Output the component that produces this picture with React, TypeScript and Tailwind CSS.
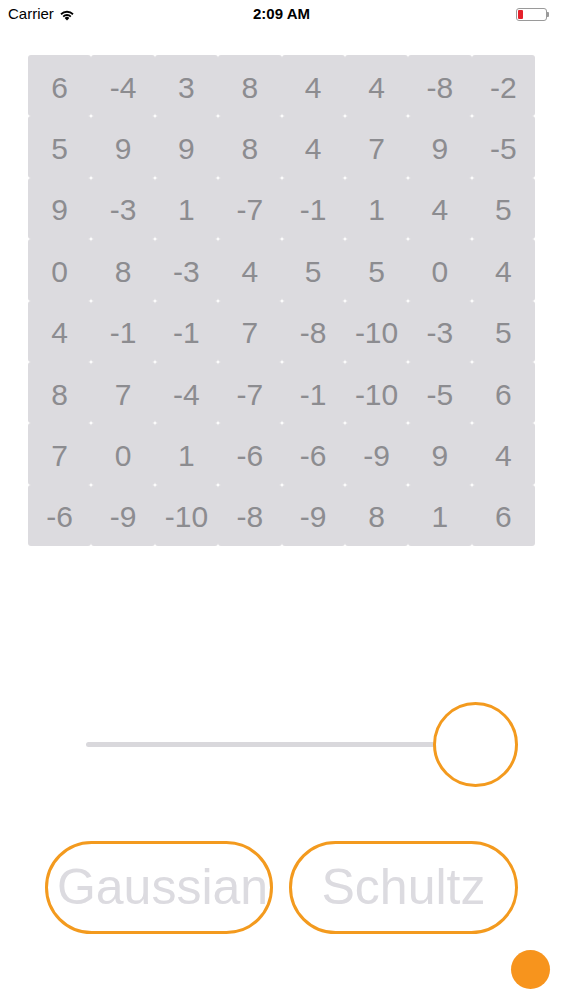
import React from "react";

const grid = [
  [6, -4, 3, 8, 4, 4, -8, -2],
  [5, 9, 9, 8, 4, 7, 9, -5],
  [9, -3, 1, -7, -1, 1, 4, 5],
  [0, 8, -3, 4, 5, 5, 0, 4],
  [4, -1, -1, 7, -8, -10, -3, 5],
  [8, 7, -4, -7, -1, -10, -5, 6],
  [7, 0, 1, -6, -6, -9, 9, 4],
  [-6, -9, -10, -8, -9, 8, 1, 6],
];

export default function App() {
  return (
    <div
      className="relative w-[563px] h-[1000px] bg-white overflow-hidden"
      style={{ fontFamily: '"Liberation Sans", Arial, sans-serif' }}
    >
      {/* Status bar */}
      <div className="relative h-[29px] flex items-center px-[8px] text-[15px] text-black">
        <div className="flex items-center gap-[5px]">
          <span>Carrier</span>
          <svg width="16" height="12" viewBox="0 0 16 12">
            <path d="M8 11.5 L5.6 8.9 A3.5 3.5 0 0 1 10.4 8.9 Z" fill="#000" />
            <path d="M3.6 6.9 A6.3 6.3 0 0 1 12.4 6.9 L11.2 8.2 A4.6 4.6 0 0 0 4.8 8.2 Z" fill="#000" />
            <path d="M1.4 4.6 A9.3 9.3 0 0 1 14.6 4.6 L13.4 5.9 A7.6 7.6 0 0 0 2.6 5.9 Z" fill="#000" />
          </svg>
        </div>
        <div className="absolute left-0 right-0 top-0 h-[29px] flex items-center justify-center font-bold text-[15px]">
          2:09 AM
        </div>
        <div className="ml-auto flex items-center mr-[6px]">
          <div className="w-[31px] h-[13px] border border-[#9a9a9a] rounded-[3px] p-[1px] flex">
            <div className="w-[5px] h-full bg-[#e5212b] rounded-[1px]" />
          </div>
          <div className="w-[2px] h-[5px] bg-[#9a9a9a] rounded-r-[1px]" />
        </div>
      </div>

      {/* Grid */}
      <div className="ml-[28px] mt-[26px] w-[507px] grid grid-cols-8 gap-0">
        {grid.flat().map((n, i) => (
          <div
            key={i}
            className="h-[61.4px] bg-[#dcdbdf] rounded-[3px] flex items-center justify-center text-[30px] text-[#8c8c90] pt-[3px]"
          >
            {n}
          </div>
        ))}
      </div>

      {/* Slider */}
      <div className="mt-[155px] ml-[86px] w-[432px] h-[86px] flex items-center">
        <div className="flex-1 h-[5px] bg-[#d9d8dc] rounded-full" />
        <div className="w-[85px] h-[85px] rounded-full border-[3px] border-[#f39a1e] bg-white shrink-0 -ml-[2px]" />
      </div>

      {/* Buttons */}
      <div className="mt-[54px] ml-[45px] flex gap-[16px]">
        <div className="w-[228px] h-[93px] rounded-full border-[3px] border-[#f39a1e] flex items-center justify-center text-[50px] text-[#dcdbe0] whitespace-nowrap">
          <span className="ml-[7px]">Gaussian</span>
        </div>
        <div className="w-[229px] h-[93px] rounded-full border-[3px] border-[#f39a1e] flex items-center justify-center text-[50px] text-[#dcdbe0]">
          Schultz
        </div>
      </div>

      {/* Orange dot */}
      <div className="absolute left-[511px] top-[950px] w-[39px] h-[39px] rounded-full bg-[#f7941d]" />
    </div>
  );
}
